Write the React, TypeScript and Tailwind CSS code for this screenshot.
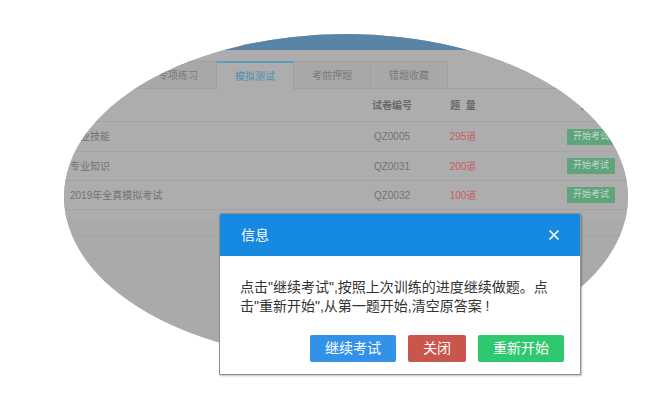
import { X } from "lucide-react";

const font = "font-['Liberation_Sans','Noto_Sans_CJK_SC',sans-serif]";

const tabs = ["章节练习", "专项练习", "模拟测试", "考前押题", "错题收藏"];

const rows = [
  { name: "专业技能", code: "QZ0005", count: "295道" },
  { name: "专业知识", code: "QZ0031", count: "200道" },
  { name: "2019年全真模拟考试", code: "QZ0032", count: "100道" },
];

function Backdrop() {
  return (
    <div className="ml-[64px] mt-[34px] h-[326px] w-[564px] overflow-hidden rounded-[50%] bg-[#aaaaaa]">
      <div className="w-[640px]">
        <div className="h-[16px] bg-[#5a84a6]" />
        <div className="h-[11px] bg-[#adadad]" />
        <div className="flex h-[28px] border-b border-[#a0a0a0] bg-[#adadad] -ml-px">
          {tabs.map((t) => {
            const active = t === "模拟测试";
            return (
              <div
                key={t}
                className={
                  active
                    ? "-mb-px flex w-[77px] items-center justify-center border-r border-t-2 border-[#a0a0a0] border-t-[#5b9cb8] bg-[#adadad] text-[10px] text-[#4a8db0]"
                    : "flex w-[77px] items-center justify-center border-r border-t border-[#a0a0a0] bg-[#a8a8a8] text-[10px] text-[#7a7a7a]"
                }
              >
                {t}
              </div>
            );
          })}
        </div>
        <div className="bg-[#adadad] pb-[10px] text-[10px]">
          <div className="grid h-[33px] grid-cols-[292px_72px_70px_186px] items-center border-b border-[#a4a4a4] font-semibold text-[#686868]">
            <div className="pl-[6px]">试卷名称</div>
            <div className="text-center">试卷编号</div>
            <div className="text-center">题&nbsp;&nbsp;量</div>
            <div className="text-center">操作</div>
          </div>
          {rows.map((r, i) => (
            <div
              key={r.code}
              className={
                "grid grid-cols-[292px_72px_70px_186px] items-center border-b border-[#a4a4a4] " +
                (i === 0 ? "h-[30px]" : "h-[29px]")
              }
            >
              <div className="pl-[6px] text-[#737373]">{r.name}</div>
              <div className="text-center text-[#737373]">{r.code}</div>
              <div className="text-center text-[#c45d5d]">{r.count}</div>
              <div className="flex justify-center">
                <span className="flex h-[16px] w-[48px] items-center justify-center bg-[#5fa47b] text-[9px] text-[#c6d9cc]">
                  开始考试
                </span>
              </div>
            </div>
          ))}
        </div>
        <div className="h-[16px] border-b border-[#a3a3a3]" />
      </div>
    </div>
  );
}

function Dialog() {
  return (
    <div className="absolute left-[219px] top-[213px] flex h-[162px] w-[362px] flex-col overflow-hidden rounded-t-[2px] border border-[#8f8f8f] bg-white shadow-[1px_1px_2px_rgba(0,0,0,0.25)]">
      <div className="flex h-[42px] shrink-0 items-center justify-between bg-[#1689e0] pl-[21px] pr-[18px] text-white">
        <span className="text-[14px]">信息</span>
        <X className="size-[16px]" strokeWidth={2.5} />
      </div>
      <div className="whitespace-nowrap pl-[20px] pt-[22px] text-[14px] leading-[19px] text-[#333]">
        点击"继续考试",按照上次训练的进度继续做题。点
        <br />
        击"重新开始",从第一题开始,清空原答案&nbsp;!
      </div>
      <div className="mt-auto flex justify-end gap-[12px] pb-[12px] pr-[16px] text-[14px] text-white">
        <button className="h-[27px] w-[86px] rounded-[2px] bg-[#3192e8]">继续考试</button>
        <button className="h-[27px] w-[58px] rounded-[2px] bg-[#c9564c]">关闭</button>
        <button className="h-[27px] w-[86px] rounded-[2px] bg-[#2ec86f]">重新开始</button>
      </div>
    </div>
  );
}

export default function App() {
  return (
    <div className={`relative h-[400px] w-[670px] overflow-hidden bg-white ${font}`}>
      <Backdrop />
      <Dialog />
    </div>
  );
}
